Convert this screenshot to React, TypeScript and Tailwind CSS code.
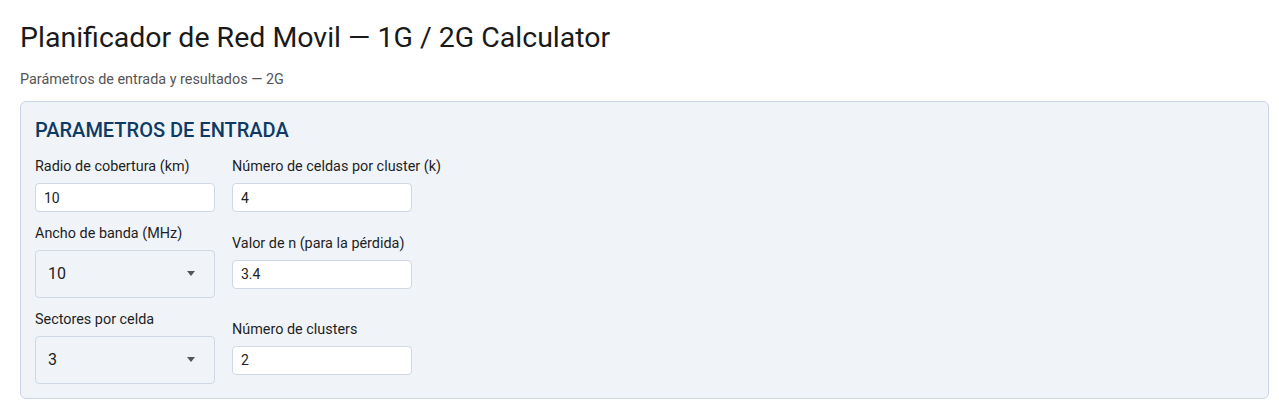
import React from "react";

function Field({ label, value }: { label: string; value: string }) {
  return (
    <label className="flex flex-col">
      <span className="mb-1.5 whitespace-nowrap text-[14.4px] leading-5 text-[#1f1f1f]">{label}</span>
      <input
        defaultValue={value}
        className="h-[29px] w-[180px] rounded border border-[#cfd8e3] bg-white px-2 text-[14px] text-[#222] outline-none"
      />
    </label>
  );
}

function SelectField({ label, value, options }: { label: string; value: string; options: string[] }) {
  return (
    <label className="flex flex-col">
      <span className="mb-1.5 whitespace-nowrap text-[14.4px] leading-5 text-[#1f1f1f]">{label}</span>
      <div className="relative w-[180px]">
        <select
          defaultValue={value}
          className="h-[48px] w-full appearance-none rounded border border-[#cfd8e3] bg-transparent pl-3 text-[16px] text-[#222] outline-none"
        >
          {options.map((o) => (
            <option key={o} value={o}>
              {o}
            </option>
          ))}
        </select>
        <span className="pointer-events-none absolute right-[20px] top-[21px] h-0 w-0 border-x-[4px] border-t-[5px] border-x-transparent border-t-[#555]" />
      </div>
    </label>
  );
}

export default function App() {
  return (
    <div className="min-h-[408px] bg-white pl-5 pr-[10px] pt-[22px] font-['Roboto',sans-serif]">
      <h1 className="text-[28.5px] leading-[32px] text-[#1a1a1a]">Planificador de Red Movil — 1G / 2G Calculator</h1>
      <p className="mt-[16px] text-[14.4px] leading-5 text-[#555]">Parámetros de entrada y resultados — 2G</p>

      <section className="mt-[11px] rounded-md border border-[#c9d5e3] bg-[#f0f4f9] p-[14px]">
        <h2 className="mb-[13px] text-[20px] font-medium leading-7 text-[#0d3b66]">PARAMETROS DE ENTRADA</h2>
        <div className="grid grid-cols-[180px_180px] items-center gap-x-[17px] gap-y-[12px]">
          <Field label="Radio de cobertura (km)" value="10" />
          <Field label="Número de celdas por cluster (k)" value="4" />
          <SelectField label="Ancho de banda (MHz)" value="10" options={["5", "10", "15", "20"]} />
          <Field label="Valor de n (para la pérdida)" value="3.4" />
          <SelectField label="Sectores por celda" value="3" options={["1", "3", "6"]} />
          <Field label="Número de clusters" value="2" />
        </div>
      </section>
    </div>
  );
}
